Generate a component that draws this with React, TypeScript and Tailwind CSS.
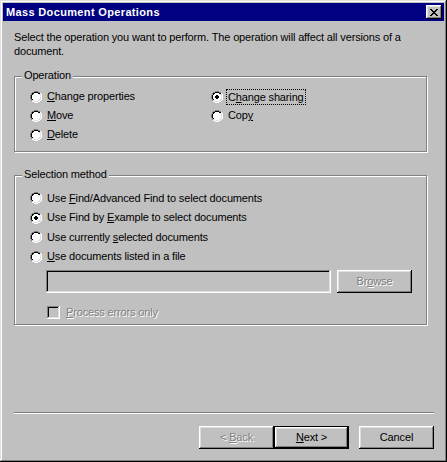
import React from 'react';

const FONT = { fontFamily: '"Liberation Sans", Arial, sans-serif' };

// Win98 pixel bitmaps
const RADIO_MAP = [
  '....gggg....',
  '..ggkkkkgg..',
  '.gkkffffkkw.',
  '.gkffffffllw',
  'gkfffffffflw',
  'gkfffffffflw',
  'gkfffffffflw',
  'gkfffffffflw',
  '.gkffffffllw',
  '.gllffffllw.',
  '..wwllllww..',
  '....wwww....',
];

const DOT_MAP = ['.kk.', 'kkkk', 'kkkk', '.kk.'];

const COLORS: Record<string, string> = {
  g: '#808080',
  k: '#000000',
  w: '#ffffff',
  f: '#ffffff',
  l: '#dfdfdf',
};

const Pixels = ({ map, dx = 0, dy = 0 }: { map: string[]; dx?: number; dy?: number }) => (
  <>
    {map.flatMap((row, y) =>
      row.split('').map((ch, x) =>
        COLORS[ch] ? (
          <rect key={`${x}-${y}`} x={x + dx} y={y + dy} width={1} height={1} fill={COLORS[ch]} />
        ) : null
      )
    )}
  </>
);

const Radio = ({ checked }: { checked?: boolean }) => (
  <svg width={12} height={12} viewBox="0 0 12 12" shapeRendering="crispEdges" className="shrink-0">
    <Pixels map={RADIO_MAP} />
    {checked && <Pixels map={DOT_MAP} dx={4} dy={4} />}
  </svg>
);

const CloseGlyph = () => (
  <svg width={8} height={7} viewBox="0 0 8 7" shapeRendering="crispEdges">
    <path
      d="M0 0h2v1h-2zM6 0h2v1h-2zM1 1h2v1h-2zM5 1h2v1h-2zM2 2h4v1h-4zM3 3h2v1h-2zM2 4h4v1h-4zM1 5h2v1h-2zM5 5h2v1h-2zM0 6h2v1h-2zM6 6h2v1h-2z"
      fill="#000"
    />
  </svg>
);

const RadioRow = ({
  checked,
  children,
  h = 'h-[19px]',
}: {
  checked?: boolean;
  children: React.ReactNode;
  h?: string;
}) => (
  <div className={`flex items-center ${h}`}>
    <Radio checked={checked} />
    <span className="ml-[5px] leading-[13px] text-black">{children}</span>
  </div>
);

const GroupBox = ({
  label,
  className,
  children,
}: {
  label: string;
  className?: string;
  children: React.ReactNode;
}) => (
  <div
    className={`relative w-[413px] border border-[#808080] [box-shadow:inset_1px_1px_#fff,1px_1px_#fff] ${className ?? ''}`}
  >
    <span className="absolute left-[7px] -top-[8px] bg-[#c0c0c0] px-[2px] leading-[13px] text-black">
      {label}
    </span>
    {children}
  </div>
);

const Button = ({
  children,
  disabled,
  isDefault,
}: {
  children: React.ReactNode;
  disabled?: boolean;
  isDefault?: boolean;
}) => (
  <button
    className={`flex h-[23px] w-[75px] items-center justify-center bg-[#c0c0c0] leading-[13px] ${
      isDefault
        ? '[box-shadow:inset_-2px_-2px_#000,inset_1px_1px_#000,inset_2px_2px_#fff,inset_-3px_-3px_#808080,inset_3px_3px_#dfdfdf]'
        : '[box-shadow:inset_-1px_-1px_#000,inset_1px_1px_#fff,inset_-2px_-2px_#808080,inset_2px_2px_#dfdfdf]'
    } ${disabled ? 'text-[#808080] [text-shadow:1px_1px_0_#fff]' : 'text-black'}`}
  >
    <span>{children}</span>
  </button>
);

export default function App() {
  return (
    <div
      style={FONT}
      className="flex h-[462px] w-[447px] flex-col bg-[#c0c0c0] p-[3px] text-[11px] tracking-[-0.15px] [box-shadow:inset_-1px_-1px_#000,inset_1px_1px_#dfdfdf,inset_-2px_-2px_#808080,inset_2px_2px_#fff]"
    >
      {/* title bar */}
      <div className="flex h-[18px] shrink-0 items-center justify-between bg-[#000080] pl-[3px] pr-[2px]">
        <span className="text-[11px] font-bold tracking-[0.35px] text-white">Mass Document Operations</span>
        <div className="flex h-[14px] w-[16px] items-center justify-center bg-[#c0c0c0] [box-shadow:inset_-1px_-1px_#000,inset_1px_1px_#fff,inset_-2px_-2px_#808080,inset_2px_2px_#dfdfdf]">
          <CloseGlyph />
        </div>
      </div>

      <div className="flex flex-1 flex-col pl-[11px] pr-[10px] pb-[10px]">
        <p className="mt-[9px] w-[413px] leading-[14px] text-black">
          Select the operation you want to perform. The operation will affect all versions of a document.
        </p>

        <GroupBox label="Operation" className="mt-[18px] pt-[10px] pb-[7px] pl-[15px]">
          <div className="grid grid-cols-[181px_1fr]">
            <div>
              <RadioRow>
                <u>C</u>hange properties
              </RadioRow>
              <RadioRow>
                <u>M</u>ove
              </RadioRow>
              <RadioRow>
                <u>D</u>elete
              </RadioRow>
            </div>
            <div>
              <div className="flex h-[19px] items-center">
                <Radio checked />
                <span className="ml-[3px] border border-dotted border-black pl-[1px] pr-[1px] leading-[14px] text-black">
                  C<u>h</u>ange sharing
                </span>
              </div>
              <RadioRow>
                Cop<u>y</u>
              </RadioRow>
            </div>
          </div>
        </GroupBox>

        <GroupBox label="Selection method" className="mt-[23px] pt-[12px] pb-[5px] pl-[15px]">
          <RadioRow h="h-[20px]">
            Use <u>F</u>ind/Advanced Find to select documents
          </RadioRow>
          <RadioRow checked>
            Use Find by <u>E</u>xample to select documents
          </RadioRow>
          <RadioRow h="h-[20px]">
            Use currently <u>s</u>elected documents
          </RadioRow>
          <RadioRow>
            <u>U</u>se documents listed in a file
          </RadioRow>
          <div className="mt-[4px] ml-[16px] flex">
            <div className="h-[23px] w-[285px] bg-[#c0c0c0] [box-shadow:inset_-1px_-1px_#fff,inset_1px_1px_#808080,inset_-2px_-2px_#dfdfdf,inset_2px_2px_#000]" />
            <div className="ml-[6px]">
              <Button disabled>
                Br<u>o</u>wse
              </Button>
            </div>
          </div>
          <div className="mt-[13px] ml-[17px] flex items-center">
            <div className="h-[13px] w-[13px] bg-[#c0c0c0] [box-shadow:inset_-1px_-1px_#fff,inset_1px_1px_#808080,inset_-2px_-2px_#dfdfdf,inset_2px_2px_#000]" />
            <span className="ml-[6px] leading-[13px] text-[#808080] [text-shadow:1px_1px_0_#fff]">
              <u>P</u>rocess errors only
            </span>
          </div>
        </GroupBox>

        <div className="flex-1" />

        <div className="h-[2px] w-full border-t border-b border-t-[#808080] border-b-white" />

        <div className="mt-[12px] flex justify-end">
          <Button disabled>
            {'< '}
            <u>B</u>ack
          </Button>
          <Button isDefault>
            <u>N</u>ext {'>'}
          </Button>
          <div className="ml-[10px]">
            <Button>Cancel</Button>
          </div>
        </div>
      </div>
    </div>
  );
}
